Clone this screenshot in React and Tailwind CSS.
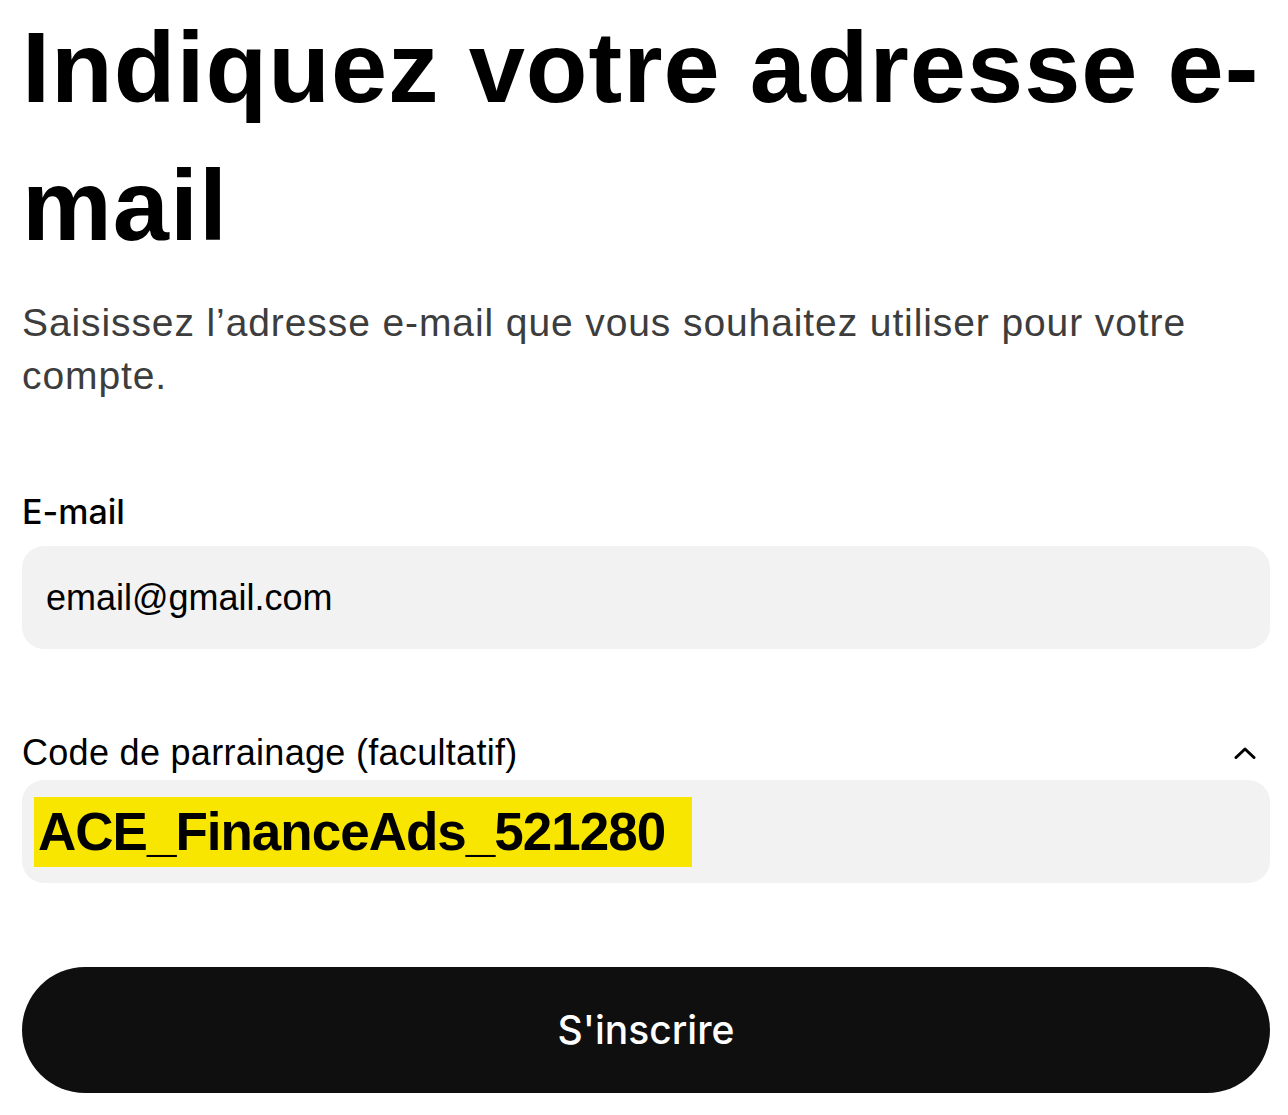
import React from "react";

export default function App() {
  return (
    <div className="min-h-[1115px] w-[1288px] bg-white pl-[22px] pr-[18px] text-black" style={{ fontFamily: '"Liberation Sans", Arial, sans-serif' }}>
      <h1 className="-mt-[2px] text-[101px] font-bold leading-[138px] tracking-[1px] text-black">
        Indiquez votre adresse e-mail
      </h1>
      <p className="mt-[22px] text-[39px] leading-[53px] tracking-[0.9px] text-[#3d3d3d]">
        Saisissez l’adresse e-mail que vous souhaitez utiliser pour votre compte.
      </p>
      <div className="mt-[90px] text-[34px] font-medium leading-[40px]" style={{ fontFamily: 'Inter, "Liberation Sans", sans-serif' }}>E-mail</div>
      <div className="mt-[14px] flex h-[103px] items-center rounded-[22px] bg-[#f2f2f2] pl-[24px] text-[36px]">
        email@gmail.com
      </div>
      <div className="mt-[84px] flex items-center justify-between pr-[14px]">
        <span className="text-[36px] leading-[40px] tracking-[0.3px]">Code de parrainage (facultatif)</span>
        <svg width="22" height="14" viewBox="0 0 22 14" fill="none" stroke="black" strokeWidth="3" strokeLinecap="round" strokeLinejoin="round">
          <path d="M2 11.5 L11 3 L20 11.5" />
        </svg>
      </div>
      <div className="mt-[7px] flex h-[103px] items-center rounded-[22px] bg-[#f2f2f2] pl-[12px]">
        <span className="flex h-[70px] w-[658px] items-center bg-[#f9e600] pl-[4px] text-[53px] font-bold tracking-[-1px]">
          ACE_FinanceAds_521280
        </span>
      </div>
      <button className="mt-[84px] flex h-[126px] w-full items-center justify-center rounded-full bg-[#0f0f0f] text-[39px] font-medium text-white" style={{ fontFamily: 'Inter, "Liberation Sans", sans-serif' }}>
        S'inscrire
      </button>
    </div>
  );
}
